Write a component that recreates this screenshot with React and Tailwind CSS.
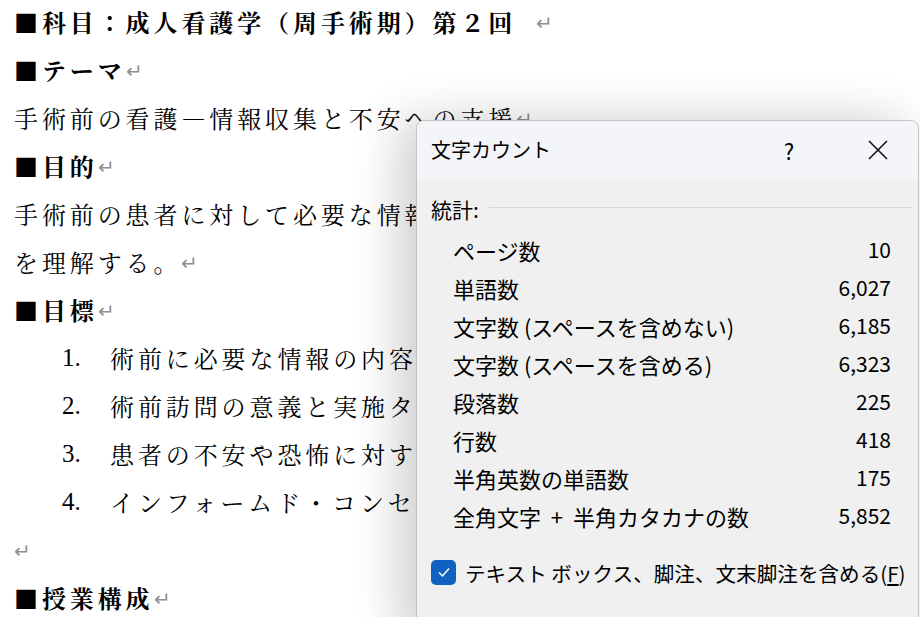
import React from "react";

const docFont = {
  fontFamily: '"Noto Serif CJK JP", "Noto Sans CJK JP", serif',
};
const numFont = { fontFamily: '"Liberation Serif", serif' };
const uiFont = { fontFamily: '"Noto Sans CJK JP", "Noto Sans", sans-serif' };

function Ret({ gap = false }) {
  return (
    <span className="text-[20px] text-[#8f8f8f] font-normal tracking-normal" style={uiFont}>
      {gap ? "\u3000" : ""}↵
    </span>
  );
}

function Line({ children, bold = false, indent = false }) {
  return (
    <div
      className={`h-[48px] flex items-center whitespace-nowrap text-[24px] tracking-[3.9px] text-black ${
        bold ? "font-bold" : ""
      } ${indent ? "pl-[62px]" : "pl-[14px]"}`}
    >
      {children}
    </div>
  );
}

function ListItem({ n, text }) {
  return (
    <Line indent>
      <span className="w-[48px] text-[25px] tracking-normal" style={numFont}>
        {n}.
      </span>
      <span>{text}</span>
    </Line>
  );
}

const stats = [
  ["ページ数", "10"],
  ["単語数", "6,027"],
  ["文字数 (スペースを含めない)", "6,185"],
  ["文字数 (スペースを含める)", "6,323"],
  ["段落数", "225"],
  ["行数", "418"],
  ["半角英数の単語数", "175"],
  ["全角文字 + 半角カタカナの数", "5,852"],
];

function WordCountDialog() {
  return (
    <div
      className="absolute left-[416px] top-[120px] w-[503px] h-[520px] rounded-t-[8px] border border-[#c4c4c4] bg-[#f0f0f0] shadow-[-16px_0_48px_rgba(0,0,0,0.2)] overflow-hidden"
      style={uiFont}
    >
      <div className="h-[58px] bg-[#f3f5f8] flex items-center pl-[14px] text-[20px] text-black">
        <span className="flex-1">文字カウント</span>
        <span className="w-[24px] text-center text-[22px] mr-[66px]">?</span>
        <svg width="22" height="22" viewBox="0 0 22 22" className="mr-[29px]">
          <path d="M2 2 L20 20 M20 2 L2 20" stroke="#111" strokeWidth="1.6" fill="none" />
        </svg>
      </div>
      <div className="flex items-center h-[28px] mt-[16px] pl-[14px] pr-[6px] text-[21px] leading-none">
        <span>統計:</span>
        <div className="flex-1 h-px bg-[#d8d8d8] ml-[10px] -mt-[4px]" />
      </div>
      <div className="mt-[8px] pl-[36px] pr-[27px]">
        {stats.map(([label, value]) => (
          <div key={label} className="h-[38px] flex items-center justify-between text-black">
            <span className="text-[22px] whitespace-pre">{label.replace(" + ", "  +  ")}</span>
            <span className="text-[21px]">{value}</span>
          </div>
        ))}
      </div>
      <div className="flex items-center mt-[21px] pl-[14px] text-[20.6px] text-black">
        <span className="w-[25px] h-[25px] rounded-[5px] bg-[#0f62c0] flex items-center justify-center">
          <svg width="14" height="14" viewBox="0 0 14 14">
            <path d="M2 7.5 L5.5 11 L12 3.5" stroke="white" strokeWidth="1.5" fill="none" />
          </svg>
        </span>
        <span className="ml-[9px] mt-[2px] whitespace-nowrap">
          テキスト ボックス、脚注、文末脚注を含める(<span className="underline underline-offset-2">F</span>)
        </span>
      </div>
    </div>
  );
}

export default function App() {
  return (
    <div className="relative w-[920px] h-[617px] bg-white overflow-hidden" style={docFont}>
      <div className="-mt-[2px]">
        <Line bold>
          ■科目：成人看護学（周手術期）第２回
          <Ret gap />
        </Line>
        <Line bold>
          ■テーマ
          <Ret />
        </Line>
        <Line>
          手術前の看護―情報収集と不安への支援
          <Ret />
        </Line>
        <Line bold>
          ■目的
          <Ret />
        </Line>
        <Line>手術前の患者に対して必要な情報収集と看護援助の方法</Line>
        <Line>
          を理解する。
          <Ret />
        </Line>
        <Line bold>
          ■目標
          <Ret />
        </Line>
        <ListItem n="1" text="術前に必要な情報の内容を説明できる。" />
        <ListItem n="2" text="術前訪問の意義と実施タイミングを述べる。" />
        <ListItem n="3" text="患者の不安や恐怖に対する援助を述べる。" />
        <ListItem n="4" text="インフォームド・コンセントを理解する。" />
        <Line>
          <Ret />
        </Line>
        <Line bold>
          ■授業構成
          <Ret />
        </Line>
      </div>
      <WordCountDialog />
    </div>
  );
}
